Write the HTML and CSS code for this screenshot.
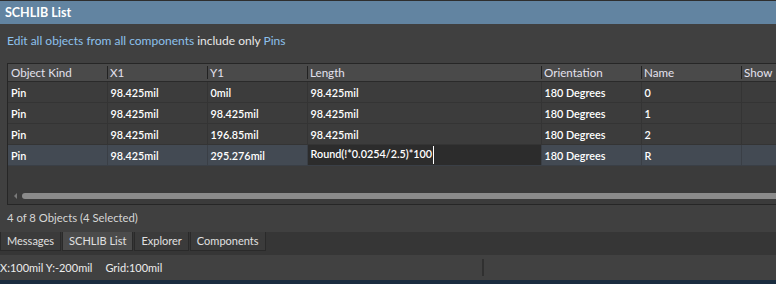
FILE: index.html
```html
<!DOCTYPE html>
<html lang="en">
<head>
    <meta charset="UTF-8">
    <title>SCHLIB List</title>
    <link rel="stylesheet" href="styles.css">
</head>
<body>
    <div class="panel">
        <div class="title">SCHLIB List</div>

        <div class="filter">
            <span class="link">Edit all objects from all components</span>
            <span class="plain">include only</span>
            <span class="link">Pins</span>
        </div>

        <div class="grid">
            <table>
                <colgroup>
                    <col class="c-kind">
                    <col class="c-std">
                    <col class="c-std">
                    <col class="c-len">
                    <col class="c-std">
                    <col class="c-std">
                    <col class="c-std">
                </colgroup>
                <thead>
                    <tr>
                        <th class="first">Object Kind</th>
                        <th>X1</th>
                        <th>Y1</th>
                        <th>Length</th>
                        <th>Orientation</th>
                        <th>Name</th>
                        <th>Show</th>
                    </tr>
                </thead>
                <tbody>
                    <tr>
                        <td>Pin</td><td>98.425mil</td><td>0mil</td><td>98.425mil</td><td>180 Degrees</td><td>0</td><td></td>
                    </tr>
                    <tr>
                        <td>Pin</td><td>98.425mil</td><td>98.425mil</td><td>98.425mil</td><td>180 Degrees</td><td>1</td><td></td>
                    </tr>
                    <tr>
                        <td>Pin</td><td>98.425mil</td><td>196.85mil</td><td>98.425mil</td><td>180 Degrees</td><td>2</td><td></td>
                    </tr>
                    <tr class="selected">
                        <td>Pin</td><td>98.425mil</td><td>295.276mil</td>
                        <td class="editing">Round(!*0.0254/2.5)*100<span class="caret"></span></td>
                        <td>180 Degrees</td><td>R</td><td></td>
                    </tr>
                </tbody>
            </table>

            <div class="hscroll">
                <span class="arrow"></span>
                <span class="thumb"></span>
            </div>
        </div>

        <div class="count">4 of 8 Objects (4 Selected)</div>
    </div>

    <div class="tabbar">
        <div class="tab">Messages</div>
        <div class="tab active">SCHLIB List</div>
        <div class="tab">Explorer</div>
        <div class="tab">Components</div>
    </div>

    <div class="statusbar">
        <span class="coords">X:100mil Y:-200mil</span>
        <span class="gridsize">Grid:100mil</span>
        <span class="divider"></span>
    </div>

    <div class="taskbar"></div>
</body>
</html>
```

FILE: styles.css
```css
/* General Styles */
body {
    margin: 0;
    width: 776px;
    height: 284px;
    overflow: hidden;
    background: #404040;
    font-family: Lato, "Open Sans", sans-serif;
    font-size: 12px;
    color: #eeeeee;
}

/* Panel */
.panel {
    border-top: 1px solid #2e2e2e;
    height: 230px;
}

.title {
    height: 23px;
    line-height: 23px;
    padding-left: 5px;
    background: #6284a1;
    color: #ffffff;
    font-weight: bold;
    font-size: 12.5px;
}

.filter {
    height: 14px;
    line-height: 14px;
    margin: 10px 0 15px 7px;
    white-space: nowrap;
}

.link {
    color: #8dc1ec;
}

.plain {
    color: #e8e8e8;
}

/* Grid */
.grid {
    margin-left: 7px;
    height: 140px;
    border: 1px solid #262626;
    border-right: none;
    background: #3b3b3b;
    overflow: hidden;
}

table {
    border-collapse: collapse;
    table-layout: fixed;
    width: 833px;
}

.c-kind { width: 99px; }
.c-std { width: 100px; }
.c-len { width: 234px; }

th {
    height: 17px;
    padding: 0 0 0 3px;
    background: #4a4a4a;
    border-bottom: 1px solid #2a2a2a;
    color: #e4e2ee;
    font-weight: normal;
    font-size: 11.6px;
    text-align: left;
    position: relative;
}

th:not(.first)::before {
    content: "";
    position: absolute;
    left: 0;
    top: 2px;
    bottom: 2px;
    width: 1px;
    background: #222222;
}

td {
    height: 20px;
    padding: 0 0 0 3px;
    border-right: 1px solid #343434;
    border-bottom: 1px solid #343434;
    background: #3c3c3c;
    color: #ffffff;
    font-size: 10.8px;
    font-weight: 600;
    white-space: nowrap;
    overflow: hidden;
}

.selected td {
    background: #434a53;
    border-color: #3a3f46;
}

.selected td.editing {
    background: #2c2c2c;
}

.caret {
    display: inline-block;
    width: 1px;
    height: 18px;
    margin-left: 1px;
    vertical-align: middle;
    background: #ffffff;
}

/* Scrollbar */
.hscroll {
    display: flex;
    align-items: center;
    height: 6px;
    margin-top: 27px;
}

.arrow {
    width: 0;
    height: 0;
    margin-left: 6px;
    border-top: 3px solid transparent;
    border-bottom: 3px solid transparent;
    border-right: 3px solid #7a7a7a;
}

.thumb {
    flex: 1;
    height: 6px;
    margin-left: 5px;
    border-radius: 3px 0 0 3px;
    background: #8b8b8b;
}

.count {
    margin: 6px 0 0 7px;
    color: #d6d6d6;
    font-size: 11.3px;
    line-height: 14px;
}

/* Tabs */
.tabbar {
    display: flex;
    height: 23px;
    margin-top: 1px;
    background: #363636;
}

.tab {
    height: 18px;
    line-height: 18px;
    padding: 0 6px;
    margin-right: 1px;
    background: #3b3b3b;
    border: 1px solid #2a2a2a;
    border-top: none;
    color: #e0e0e0;
    font-size: 11px;
}

.tab.active {
    background: #4b4b4b;
}

/* Status bar */
.statusbar {
    display: flex;
    align-items: center;
    height: 25px;
    background: #414141;
    color: #ececec;
    font-size: 11px;
    white-space: nowrap;
}

.gridsize {
    margin-left: 13px;
}

.divider {
    width: 2px;
    height: 17px;
    margin-left: 320px;
    background: #303030;
}

.taskbar {
    height: 4px;
    background: #1a2c3f;
}
```
